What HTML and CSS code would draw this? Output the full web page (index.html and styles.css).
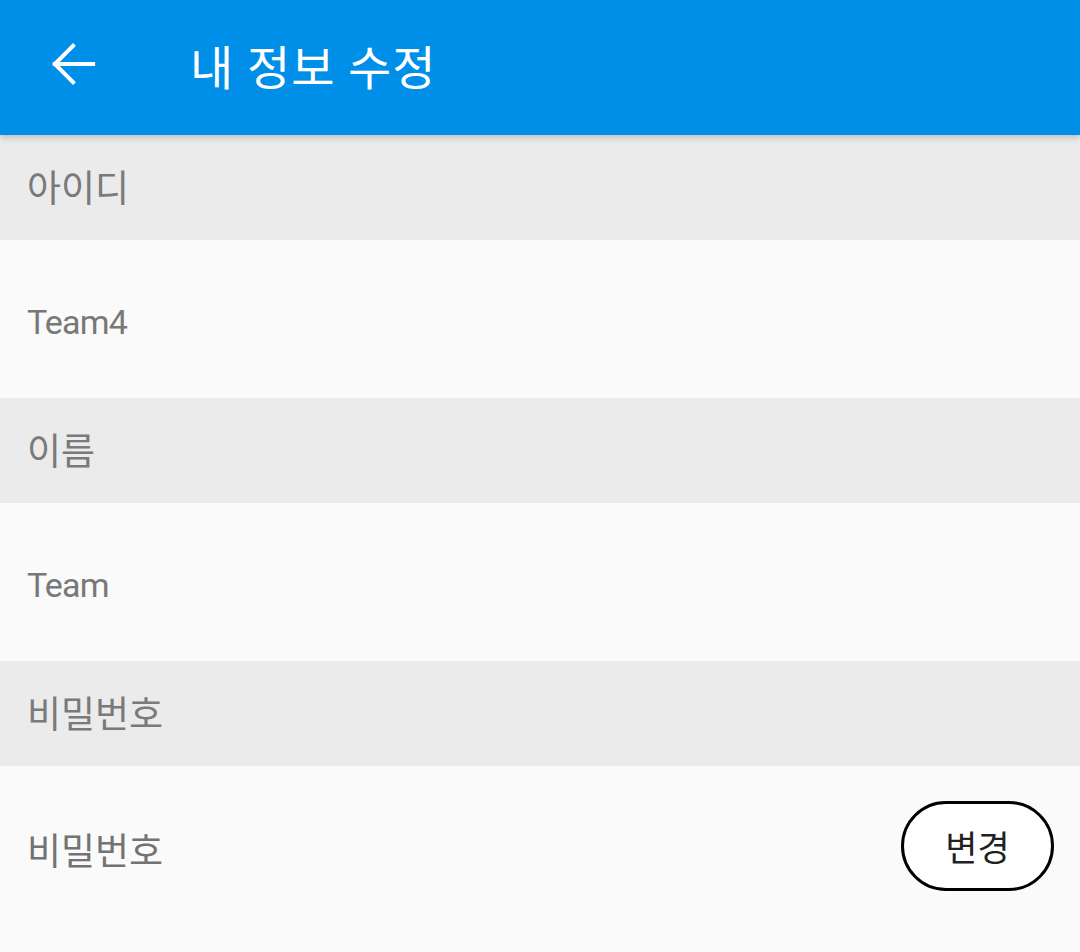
FILE: index.html
```html
<!DOCTYPE html>
<html lang="ko">
<head>
<meta charset="utf-8">
<link rel="stylesheet" href="styles.css">
</head>
<body>
<header class="appbar">
  <svg class="back" viewBox="0 0 46 44" width="44" height="44"><path d="M3 22H43M22 3L3 22L22 41" fill="none" stroke="#fff" stroke-width="4.2" stroke-linecap="square" stroke-linejoin="miter"/></svg>
  <h1 class="title">내 정보 수정</h1>
</header>
<main>
  <div class="label">아이디</div>
  <div class="value"><span class="latin">Team4</span></div>
  <div class="label">이름</div>
  <div class="value"><span class="latin">Team</span></div>
  <div class="label">비밀번호</div>
  <div class="value last"><span>비밀번호</span><button class="btn">변경</button></div>
</main>
</body>
</html>
```
FILE: styles.css
```css
html, body { margin: 0; padding: 0; }
body {
  width: 1080px;
  height: 952px;
  overflow: hidden;
  background: #fafafa;
  font-family: Roboto, "Noto Sans CJK KR", sans-serif;
}
.appbar {
  height: 135px;
  background: #008fe8;
  display: flex;
  align-items: center;
  box-shadow: 0 3px 6px rgba(0,0,0,0.18);
  position: relative;
  z-index: 1;
}
.back { margin-left: 52px; margin-right: 94px; margin-top: -7px; }
.title {
  margin: 0;
  color: #fff;
  font-weight: 400;
  font-size: 47px;
  letter-spacing: 1px;
  margin-top: -6px;
}
.label {
  height: 105px;
  background: #ebebeb;
  display: flex;
  align-items: center;
  padding-left: 27px;
  color: #7a7a7a;
  font-size: 37px;
  box-sizing: border-box;
  padding-bottom: 4px;
}
.value {
  height: 158px;
  display: flex;
  align-items: center;
  padding-left: 27px;
  color: #737373;
  font-size: 37px;
  background: #fafafa;
  box-sizing: border-box;
}
.latin {
  font-size: 34px;
  letter-spacing: -0.8px;
  padding-top: 6px;
  color: #787878;
}
.value.last { justify-content: space-between; padding-right: 26px; height: 185px; padding-bottom: 26px; }
.btn {
  width: 153px;
  height: 90px;
  border: 3px solid #000;
  border-radius: 45px;
  background: #fff;
  font-family: Roboto, "Noto Sans CJK KR", sans-serif;
  font-size: 35px;
  color: #222;
  padding: 0;
}
.value.last span { padding-top: 6px; }
```
